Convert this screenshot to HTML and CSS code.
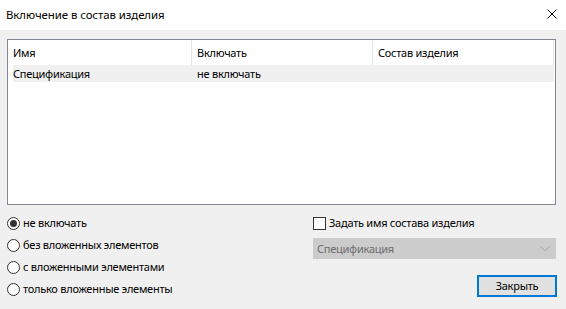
FILE: index.html
```html
<!DOCTYPE html>
<html>
<head>
<meta charset="utf-8">
<link rel="stylesheet" href="styles.css">
</head>
<body>
<div class="dialog">
  <div class="titlebar">
    <span class="title">Включение в состав изделия</span>
    <span class="close">
      <svg width="10" height="10" viewBox="0 0 10 10"><path d="M0.5 0.5 L9.5 9.5 M9.5 0.5 L0.5 9.5" stroke="#000" stroke-width="1" fill="none"/></svg>
    </span>
  </div>
  <div class="content">
    <div class="list">
      <div class="header">
        <div class="hcell c1">Имя</div>
        <div class="hcell c2">Включать</div>
        <div class="hcell c3">Состав изделия</div>
      </div>
      <div class="row">
        <div class="cell c1">Спецификация</div>
        <div class="cell c2">не включать</div>
        <div class="cell c3"></div>
      </div>
    </div>
    <div class="bottom">
      <div class="radios">
        <div class="radio checked"><span class="dot"></span><span class="label">не включать</span></div>
        <div class="radio"><span class="dot"></span><span class="label">без вложенных элементов</span></div>
        <div class="radio"><span class="dot"></span><span class="label">с вложенными элементами</span></div>
        <div class="radio"><span class="dot"></span><span class="label">только вложенные элементы</span></div>
      </div>
      <div class="side">
        <div class="check"><span class="box"></span><span class="label">Задать имя состава изделия</span></div>
        <div class="combo">
          <span class="combo-text">Спецификация</span>
          <svg class="chev" width="10" height="6" viewBox="0 0 10 6"><path d="M0.5 0.5 L5 5 L9.5 0.5" stroke="#a6a6a6" stroke-width="1" fill="none"/></svg>
        </div>
        <div class="btnrow"><div class="button">Закрыть</div></div>
      </div>
    </div>
  </div>
</div>
</body>
</html>
```
FILE: styles.css
```css
html, body {
  margin: 0;
  padding: 0;
}
body {
  width: 566px;
  height: 309px;
  overflow: hidden;
  background: #f0f0f0;
  font-family: "Noto Sans", "DejaVu Sans", sans-serif;
  font-size: 11px;
  letter-spacing: -0.25px;
  color: #000;
}
.dialog {
  width: 566px;
  height: 309px;
  display: flex;
  flex-direction: column;
}
.titlebar {
  height: 30px;
  background: #fff;
  display: flex;
  align-items: center;
  justify-content: space-between;
  padding: 0 9px 0 6px;
}
.title {
  font-size: 11.4px;
  letter-spacing: -0.05px;
  line-height: 16px;
  margin-top: -1px;
}
.close {
  display: flex;
  width: 10px;
  height: 10px;
  margin-top: -2px;
}
.content {
  padding: 9px 10px 0 7px;
}
.list {
  height: 166px;
  box-sizing: border-box;
  border: 1px solid #828790;
  background: #fff;
}
.header {
  display: flex;
  height: 25px;
}
.hcell {
  box-sizing: border-box;
  height: 25px;
  line-height: 25px;
  padding-left: 5px;
  border-right: 1px solid #e5e5e5;
  white-space: nowrap;
}
.c1 { width: 184px; }
.c2 { width: 181px; }
.c3 { width: 181px; }
.row {
  display: flex;
  height: 17px;
  line-height: 17px;
}
.row .cell {
  box-sizing: border-box;
  padding-left: 5px;
  background: #f0f0f0;
  white-space: nowrap;
}
.row .c1 {
  margin-left: 5px;
  width: 179px;
  padding-left: 0;
}
.bottom {
  display: flex;
  justify-content: space-between;
  padding-top: 7px;
}
.radios {
  display: flex;
  flex-direction: column;
}
.radio {
  height: 22px;
  display: flex;
  align-items: center;
}
.dot {
  width: 13px;
  height: 13px;
  box-sizing: border-box;
  border: 1px solid #333;
  border-radius: 50%;
  background: #fff;
  display: flex;
  align-items: center;
  justify-content: center;
  margin-right: 3px;
}
.radio.checked .dot::after {
  content: "";
  width: 7px;
  height: 7px;
  border-radius: 50%;
  background: #333;
}
.label {
  white-space: nowrap;
  line-height: 16px;
}
.side {
  width: 243px;
  display: flex;
  flex-direction: column;
}
.check {
  height: 22px;
  display: flex;
  align-items: center;
}
.box {
  width: 13px;
  height: 13px;
  box-sizing: border-box;
  border: 1px solid #333;
  background: #fff;
  margin-right: 3px;
}
.combo {
  margin-top: 4px;
  height: 21px;
  box-sizing: border-box;
  background: #cccccc;
  border: 1px solid #cccccc;
  display: flex;
  align-items: center;
  justify-content: space-between;
  padding: 0 5px 0 3px;
}
.combo-text {
  color: #6d6d6d;
  line-height: 16px;
}
.chev {
  display: block;
}
.btnrow {
  display: flex;
  justify-content: flex-end;
  margin-top: 16px;
}
.button {
  width: 80px;
  height: 22px;
  box-sizing: border-box;
  border: 2px solid #0078d7;
  background: #e1e1e1;
  display: flex;
  align-items: center;
  justify-content: center;
  line-height: 16px;
  margin-right: -1px;
}
```
